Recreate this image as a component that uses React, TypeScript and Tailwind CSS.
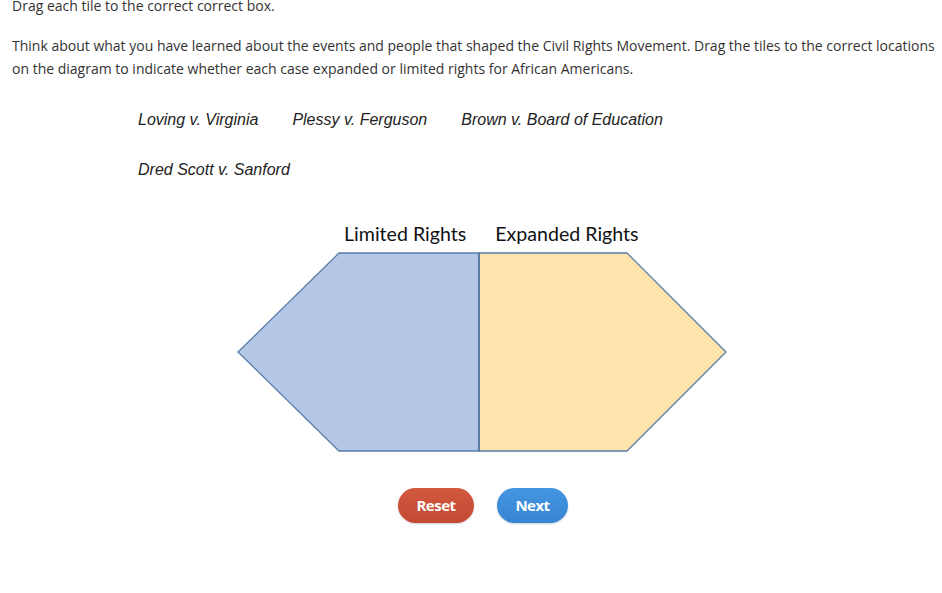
import React from "react";

export default function App() {
  const tiles1 = ["Loving v. Virginia", "Plessy v. Ferguson", "Brown v. Board of Education"];
  return (
    <div className="w-[942px] h-[593px] overflow-hidden bg-white" style={{ fontFamily: '"Open Sans", sans-serif' }}>
      <div className="pl-3 pr-0 mt-[-6px] text-[14px] leading-[23px] text-[#333333]">
        <p>Drag each tile to the correct correct box.</p>
        <p className="mt-[17px]">
          Think about what you have learned about the events and people that shaped the Civil Rights Movement. Drag the tiles to the correct locations on the diagram to indicate whether each case expanded or limited rights for African Americans.
        </p>
      </div>
      <div
        className="ml-[138px] mt-[30px] italic text-[16px] leading-[20px] text-[#222222]"
        style={{ fontFamily: '"Liberation Sans", Arial, sans-serif' }}
      >
        <div className="flex gap-[34px]">
          {tiles1.map((t) => (
            <span key={t}>{t}</span>
          ))}
        </div>
        <div className="mt-[30px]">Dred Scott v. Sanford</div>
      </div>
      <div className="mt-[42px] flex flex-col items-center">
        <div className="w-[490px] ml-[22px] flex flex-col">
          <div
            className="flex text-[19.6px] leading-[24px] text-[#111111] h-[24px]"
            style={{ fontFamily: 'Lato, "Open Sans", sans-serif' }}
          >
            <div className="ml-[107px]">Limited Rights</div>
            <div className="ml-[29px]">Expanded Rights</div>
          </div>
          <svg width="490" height="201" viewBox="0 0 490 201" className="mt-[6px]">
            <polygon points="1,100 102,1 242,1 242,199 102,199" fill="#b4c7e7" stroke="#5a7ea8" strokeWidth="1.3" />
            <polygon points="242,1 390,1 489,100 390,199 242,199" fill="#ffe4ae" stroke="#5a7ea8" strokeWidth="1.3" />
            <line x1="242" y1="1" x2="242" y2="199" stroke="#4e72a0" strokeWidth="1.5" />
          </svg>
        </div>
      </div>
      <div className="mt-[35px] flex justify-center gap-[23px] ml-[24px]">
        <button className="w-[76px] h-[35px] rounded-full bg-gradient-to-b from-[#d2583f] to-[#c24a33] text-white font-bold text-[15px] tracking-[-0.5px] shadow-[0_1px_2px_rgba(0,0,0,0.2)]">
          Reset
        </button>
        <button className="w-[71px] h-[35px] rounded-full bg-gradient-to-b from-[#4596e0] to-[#3685d3] text-white font-bold text-[15px] tracking-[-0.5px] shadow-[0_1px_2px_rgba(0,0,0,0.2)]">
          Next
        </button>
      </div>
    </div>
  );
}
